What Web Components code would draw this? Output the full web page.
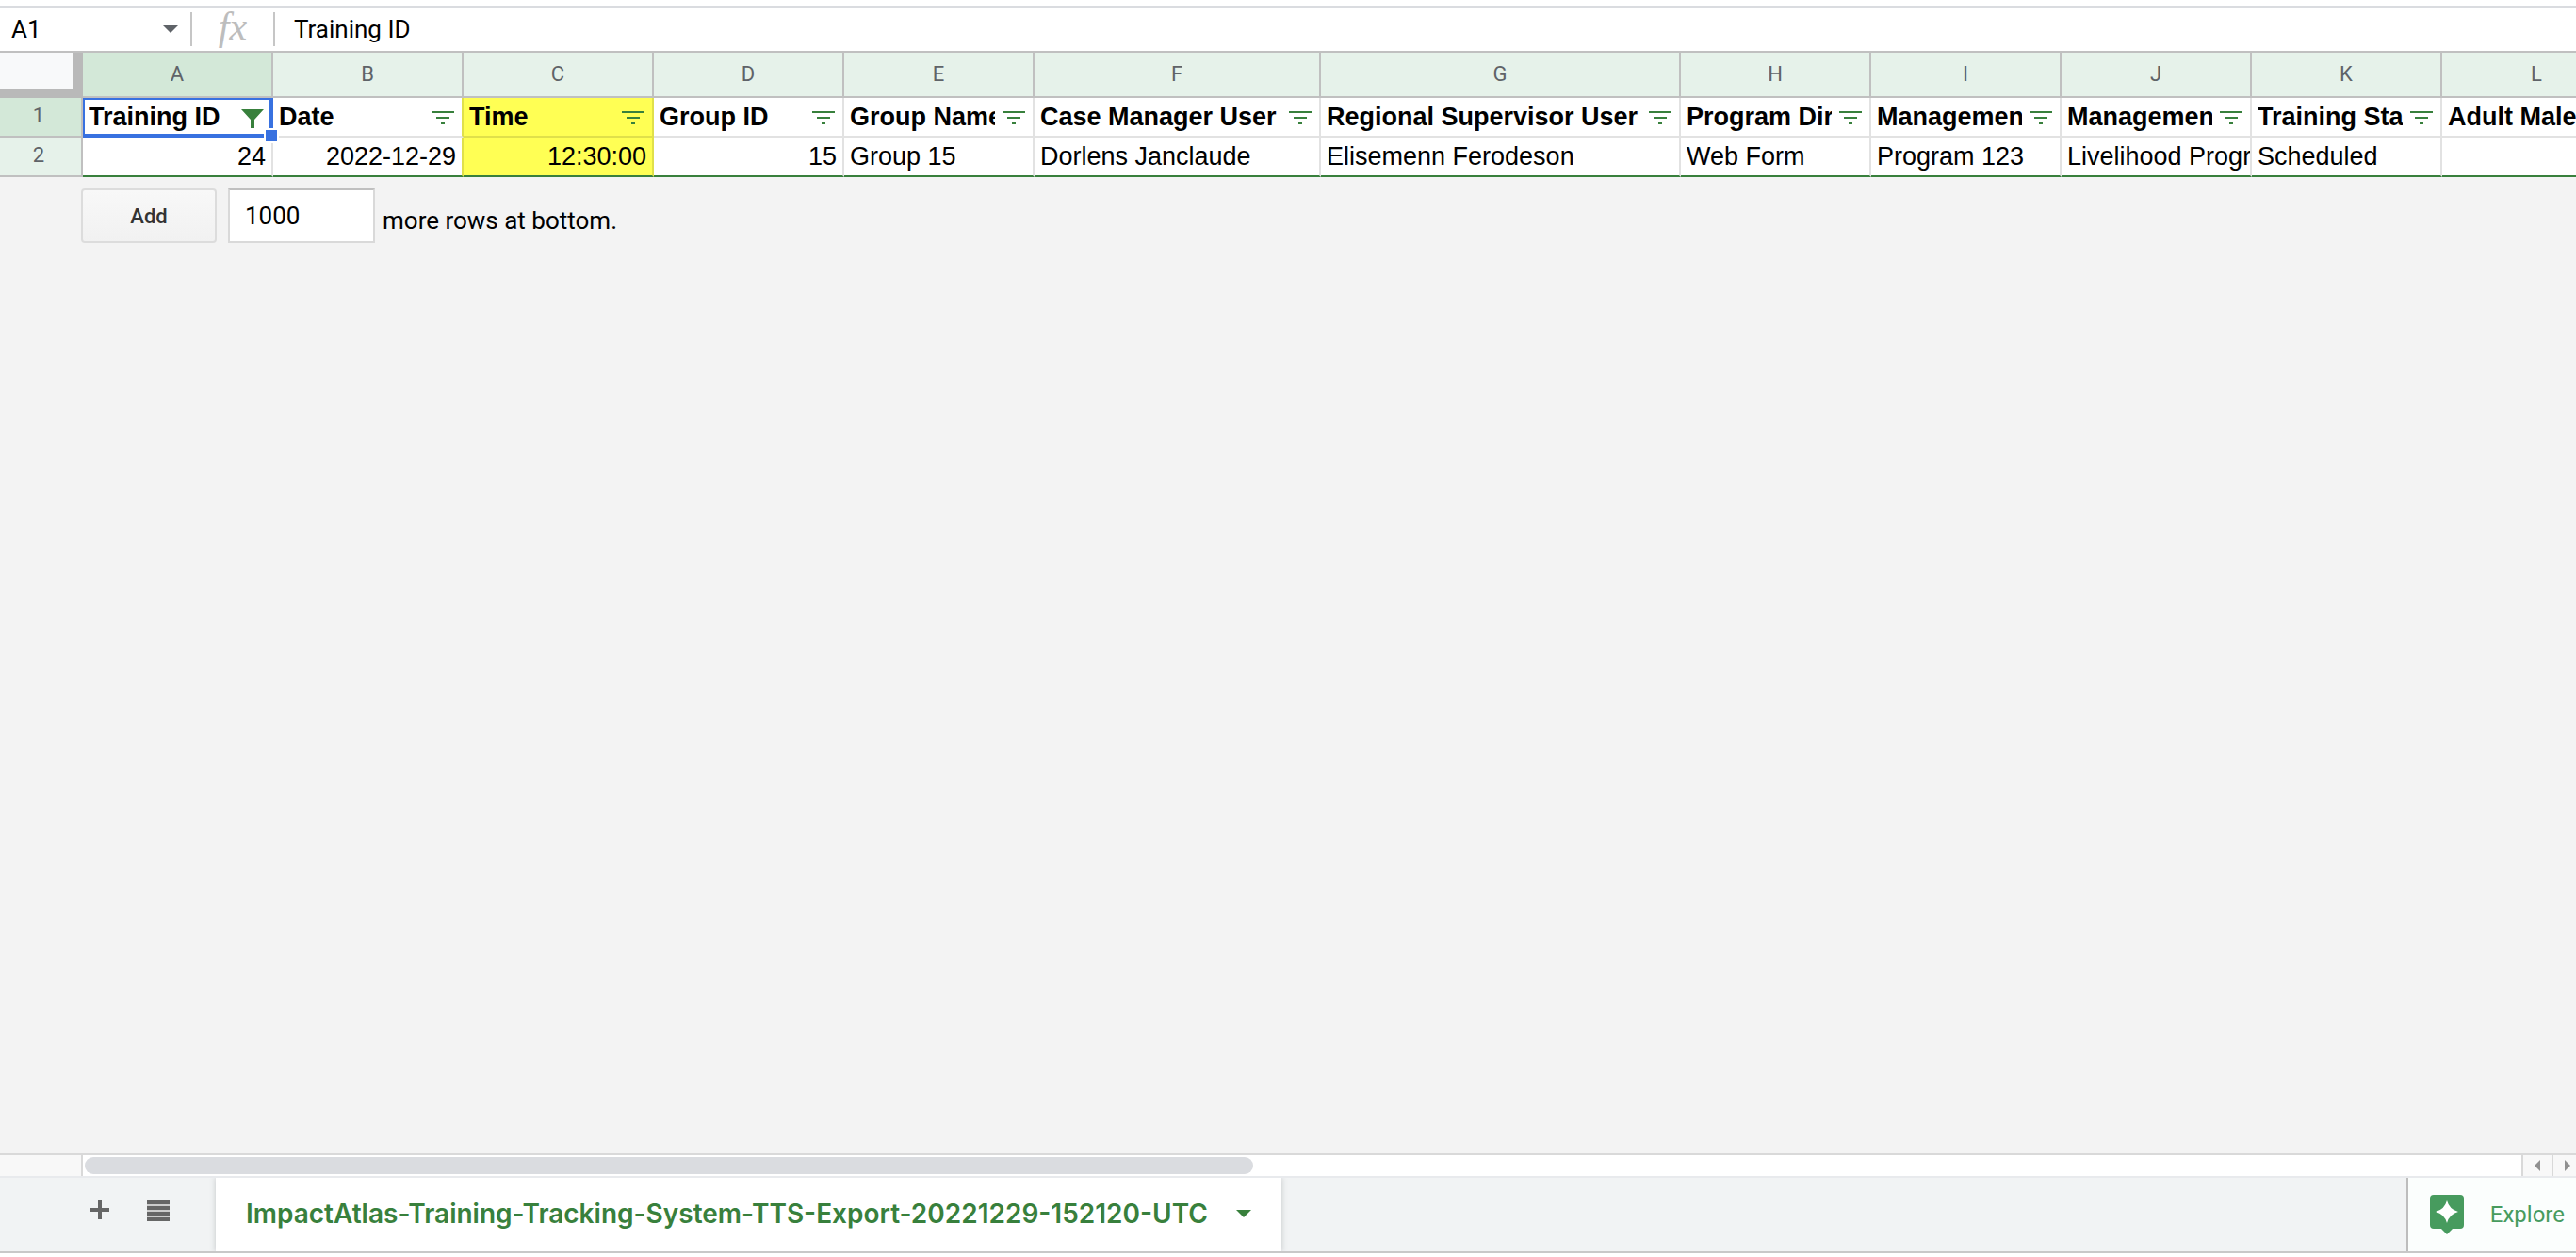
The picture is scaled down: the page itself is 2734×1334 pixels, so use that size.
<!DOCTYPE html>
<html lang="en">
<head>
<meta charset="utf-8">
<title>ImpactAtlas Training Tracking Export</title>
<style>
    body {
        margin: 0;
        font-family: Roboto, sans-serif;
        font-size: 26px;
        color: #000;
        background: #fff;
    }
</style>
</head>
<body>
<sheet-app>
    <formula-bar slot="formula" cell="A1" value="Training ID"></formula-bar>
    <sheet-grid slot="sheet"></sheet-grid>
    <add-rows slot="sheet" count="1000">more rows at bottom.</add-rows>
    <sheet-scrollbar slot="footer"></sheet-scrollbar>
    <sheet-tabs slot="footer">
        <sheet-tab>ImpactAtlas-Training-Tracking-System-TTS-Export-20221229-152120-UTC</sheet-tab>
        <explore-button slot="end">Explore</explore-button>
    </sheet-tabs>
</sheet-app>

<script>
class SheetApp extends HTMLElement {
    constructor() {
        super();
        this.attachShadow({ mode: 'open' }).innerHTML = `
            <style>
                :host {
                    display: flex;
                    flex-direction: column;
                    box-sizing: border-box;
                    height: 100vh;
                    padding: 6px 0 4px;
                    overflow: hidden;
                }
                main {
                    flex: 1;
                    min-height: 0;
                    overflow: hidden;
                    background: #f3f3f3;
                }
            </style>
            <slot name="formula"></slot>
            <main><slot name="sheet"></slot></main>
            <slot name="footer"></slot>
        `;
    }
}

class FormulaBar extends HTMLElement {
    constructor() {
        super();
        this.attachShadow({ mode: 'open' });
    }

    connectedCallback() {
        this.shadowRoot.innerHTML = `
            <style>
                :host {
                    display: flex;
                    align-items: center;
                    height: 46px;
                    border-top: 2px solid #dadce0;
                    border-bottom: 2px solid #c0c0c0;
                }
                input, button {
                    border: 0;
                    padding: 0;
                    background: none;
                    font: inherit;
                    color: inherit;
                    outline: none;
                }
                .name { width: 160px; padding-left: 12px; box-sizing: border-box; }
                .caret { display: flex; width: 42px; justify-content: center; }
                .line { width: 2px; height: 36px; background: #c6c6c6; }
                .fx {
                    width: 86px;
                    padding-bottom: 6px;
                    text-align: center;
                    font: italic 42px/40px "Liberation Serif", serif;
                    color: #bdbdbd;
                }
                .value { flex: 1; padding-left: 20px; }
            </style>
            <input class="name" aria-label="Name box" value="${this.getAttribute('cell')}">
            <button class="caret" aria-label="Named ranges">
                <svg width="16" height="8" viewBox="0 0 16 8"><path d="M0 0h16L8 8z" fill="#5f6368"/></svg>
            </button>
            <span class="line"></span>
            <span class="fx">fx</span>
            <span class="line"></span>
            <input class="value" aria-label="Formula" value="${this.getAttribute('value')}">
        `;
    }
}

class FilterButton extends HTMLElement {
    constructor() {
        super();
        this.attachShadow({ mode: 'open' });
    }

    connectedCallback() {
        const shape = this.hasAttribute('active')
            ? 'M0 4h24L14 15v9h-4v-9z'
            : 'M0 6h24v2H0zM5 12h14v2H5zM10 18h4v2h-4z';
        this.shadowRoot.innerHTML = `
            <style>
                :host { display: block; flex: none; }
                button { display: flex; border: 0; padding: 0; background: none; }
            </style>
            <button aria-label="Filter">
                <svg width="24" height="24" viewBox="0 0 24 24"><path d="${shape}" fill="#38803c"/></svg>
            </button>
        `;
    }
}

class SheetGrid extends HTMLElement {
    constructor() {
        super();
        this.attachShadow({ mode: 'open' });
        this.columns = [
            { title: 'Training ID', value: '24', width: 202, number: true },
            { title: 'Date', value: '2022-12-29', width: 202, number: true },
            { title: 'Time', value: '12:30:00', width: 202, number: true, marked: true },
            { title: 'Group ID', value: '15', width: 202, number: true },
            { title: 'Group Name', value: 'Group 15', width: 202 },
            { title: 'Case Manager User', value: 'Dorlens Janclaude', width: 304 },
            { title: 'Regional Supervisor User', value: 'Elisemenn Ferodeson', width: 382 },
            { title: 'Program Dir', value: 'Web Form', width: 202 },
            { title: 'Managemen', value: 'Program 123', width: 202 },
            { title: 'Managemen', value: 'Livelihood Progr', width: 202 },
            { title: 'Training Stat', value: 'Scheduled', width: 202 },
            { title: 'Adult Male', value: '', width: 202 }
        ];
    }

    connectedCallback() {
        this.render();
    }

    cellClass(column, index) {
        const next = this.columns[index + 1];
        const names = [];
        if (column.number) names.push('number');
        if (column.marked) names.push('marked');
        if (next && next.marked) names.push('before-marked');
        return names.join(' ');
    }

    render() {
        const total = this.columns.reduce((sum, column) => sum + column.width, 88);

        this.shadowRoot.innerHTML = `
            <style>
                :host { display: block; overflow: hidden; }
                table {
                    width: ${total}px;
                    table-layout: fixed;
                    border-collapse: separate;
                    border-spacing: 0;
                    background: #fff;
                }
                th, td {
                    box-sizing: border-box;
                    padding: 0;
                    border: 0 solid #e2e2e2;
                    border-width: 0 2px 2px 0;
                }
                thead th, tbody th {
                    height: 42px;
                    border-color: #c0c0c0;
                    background: #e6f2ea;
                    font-size: 22px;
                    font-weight: 400;
                    color: #5f6368;
                }
                thead th { height: 48px; padding-bottom: 2px; }
                tbody th { padding: 0 4px 4px 0; }
                .corner {
                    border: solid #b9b9b9;
                    border-width: 0 10px 10px 0;
                    background: #f8f9fa;
                }
                thead th.current, tbody th.current { background: #d3e8d8; }
                td { font-family: "Liberation Sans", Arial, sans-serif; font-size: 27px; }
                .cell {
                    display: flex;
                    align-items: center;
                    gap: 8px;
                    height: 40px;
                    padding: 0 6px;
                    overflow: hidden;
                    white-space: nowrap;
                }
                .title .cell { padding-right: 8px; font-weight: 700; }
                .cell span { flex: 1; }
                .title span { min-width: 0; overflow: hidden; line-height: 40px; }
                .record .number { text-align: right; }
                .marked { background: #ffff54; border-color: #e0e04a; }
                .before-marked { border-right-color: #e0e04a; }
                .record td { border-bottom-color: #38803c; }
                .selected { position: relative; }
                .selected::before {
                    content: "";
                    position: absolute;
                    inset: 0 -2px -2px 0;
                    border: solid #3871e0;
                    border-width: 2px 4px 4px 2px;
                    pointer-events: none;
                }
                .selected::after {
                    content: "";
                    position: absolute;
                    right: -6px;
                    bottom: -6px;
                    width: 12px;
                    height: 12px;
                    background: #3871e0;
                    box-shadow: 0 0 0 2px #fff;
                }
            </style>
            <table>
                <colgroup>
                    <col style="width: 88px">
                    ${this.columns.map(column => `<col style="width: ${column.width}px">`).join('')}
                </colgroup>
                <thead>
                    <tr>
                        <th class="corner" aria-label="Select all"></th>
                        ${this.columns.map((column, i) => `
                            <th scope="col" class="${i === 0 ? 'current' : ''}">${String.fromCharCode(65 + i)}</th>
                        `).join('')}
                    </tr>
                </thead>
                <tbody>
                    <tr class="title">
                        <th scope="row" class="current">1</th>
                        ${this.columns.map((column, i) => `
                            <td class="${this.cellClass(column, i)} ${i === 0 ? 'selected' : ''}">
                                <div class="cell"><span>${column.title}</span><filter-button ${i === 0 ? 'active' : ''}></filter-button></div>
                            </td>
                        `).join('')}
                    </tr>
                    <tr class="record">
                        <th scope="row">2</th>
                        ${this.columns.map((column, i) => `
                            <td class="${this.cellClass(column, i)}"><div class="cell"><span>${column.value}</span></div></td>
                        `).join('')}
                    </tr>
                </tbody>
            </table>
        `;
    }
}

class AddRows extends HTMLElement {
    constructor() {
        super();
        this.attachShadow({ mode: 'open' });
    }

    connectedCallback() {
        this.shadowRoot.innerHTML = `
            <style>
                :host { display: flex; padding: 12px 0 0 86px; }
                button {
                    width: 144px;
                    height: 58px;
                    margin-right: 12px;
                    border: 2px solid #dcdcdc;
                    border-radius: 4px;
                    background: linear-gradient(#f8f8f8, #f1f1f1);
                    font: 500 22px Roboto, sans-serif;
                    color: #333;
                }
                input {
                    box-sizing: border-box;
                    width: 156px;
                    height: 58px;
                    padding: 0 16px;
                    border: 2px solid #d9d9d9;
                    border-top-color: #c0c0c0;
                    background: #fff;
                    font: inherit;
                }
                label { padding: 10px 0 0 8px; line-height: 48px; }
            </style>
            <button>Add</button>
            <input id="count" value="${this.getAttribute('count')}">
            <label for="count"><slot></slot></label>
        `;
    }
}

class SheetScrollbar extends HTMLElement {
    constructor() {
        super();
        this.attachShadow({ mode: 'open' }).innerHTML = `
            <style>
                :host { display: flex; height: 22px; border-top: 2px solid #d9d9d9; }
                .start { width: 86px; border-right: 2px solid #d9d9d9; background: #f8f8f8; }
                .track { flex: 1; padding: 2px; }
                .thumb { width: 48%; height: 18px; border-radius: 9px; background: #dadce0; }
                button {
                    display: flex;
                    align-items: center;
                    justify-content: center;
                    width: 32px;
                    border: 0;
                    border-left: 2px solid #d9d9d9;
                    padding: 0;
                    background: #f8f8f8;
                }
                button:last-child { width: 26px; padding-left: 6px; }
            </style>
            <div class="start"></div>
            <div class="track"><div class="thumb"></div></div>
            <button aria-label="Scroll left">
                <svg width="6" height="12" viewBox="0 0 6 12"><path d="M6 0v12L0 6z" fill="#909090"/></svg>
            </button>
            <button aria-label="Scroll right">
                <svg width="6" height="12" viewBox="0 0 6 12"><path d="M0 0v12l6-6z" fill="#909090"/></svg>
            </button>
        `;
    }
}

class SheetTabs extends HTMLElement {
    constructor() {
        super();
        this.attachShadow({ mode: 'open' }).innerHTML = `
            <style>
                :host {
                    display: flex;
                    height: 78px;
                    border-top: 2px solid #e8eaed;
                    border-bottom: 2px solid #c8c8c8;
                    background: #f1f3f4;
                }
                .tools { display: flex; gap: 40px; width: 133px; padding: 24px 0 0 96px; }
                button { display: flex; border: 0; padding: 0; background: none; }
                .space { flex: 1; }
            </style>
            <div class="tools">
                <button aria-label="Add sheet">
                    <svg width="20" height="22" viewBox="0 0 20 22"><path d="M8 0h4v8h8v4h-8v8H8v-8H0V8h8z" fill="#666"/></svg>
                </button>
                <button aria-label="All sheets">
                    <svg width="24" height="22" viewBox="0 0 24 22">
                        <path d="M0 0h24v22H0z" fill="#ccc"/>
                        <path d="M0 0h24v4H0zM0 6h24v4H0zM0 12h24v4H0zM0 18h24v4H0z" fill="#666"/>
                    </svg>
                </button>
            </div>
            <slot></slot>
            <div class="space"></div>
            <slot name="end"></slot>
        `;
    }
}

class SheetTab extends HTMLElement {
    constructor() {
        super();
        this.attachShadow({ mode: 'open' }).innerHTML = `
            <style>
                :host { display: flex; background: #fff; box-shadow: 0 0 6px rgba(60, 64, 67, 0.25); clip-path: inset(0 -8px); }
                button {
                    display: flex;
                    align-items: center;
                    gap: 30px;
                    border: 0;
                    padding: 0 32px 2px;
                    background: none;
                    font: 600 28px Inter, sans-serif;
                    color: #38803c;
                    white-space: nowrap;
                }
            </style>
            <button>
                <slot></slot>
                <svg width="16" height="8" viewBox="0 0 16 8"><path d="M0 0h16L8 8z" fill="#38803c"/></svg>
            </button>
        `;
    }
}

class ExploreButton extends HTMLElement {
    constructor() {
        super();
        this.attachShadow({ mode: 'open' }).innerHTML = `
            <style>
                :host { display: flex; }
                button {
                    display: flex;
                    align-items: center;
                    gap: 28px;
                    border: 0;
                    border-left: 2px solid #bdbdbd;
                    padding: 0 12px 0 23px;
                    background: #fbfefd;
                    font: 24px Roboto, sans-serif;
                    color: #479b5e;
                }
            </style>
            <button>
                <svg width="36" height="42" viewBox="0 0 36 42">
                    <path d="M4 0h28a4 4 0 0 1 4 4v28a4 4 0 0 1-4 4h-8l-6 6-6-6H4a4 4 0 0 1-4-4V4a4 4 0 0 1 4-4z" fill="#479b5e"/>
                    <path d="M18 6q2.500 9.500 12 12q-9.500 2.500-12 12q-2.500-9.500-12-12q9.500-2.500 12-12z" fill="#fff"/>
                </svg>
                <slot></slot>
            </button>
        `;
    }
}

customElements.define('sheet-app', SheetApp);
customElements.define('formula-bar', FormulaBar);
customElements.define('filter-button', FilterButton);
customElements.define('sheet-grid', SheetGrid);
customElements.define('add-rows', AddRows);
customElements.define('sheet-scrollbar', SheetScrollbar);
customElements.define('sheet-tabs', SheetTabs);
customElements.define('sheet-tab', SheetTab);
customElements.define('explore-button', ExploreButton);
</script>
</body>
</html>
